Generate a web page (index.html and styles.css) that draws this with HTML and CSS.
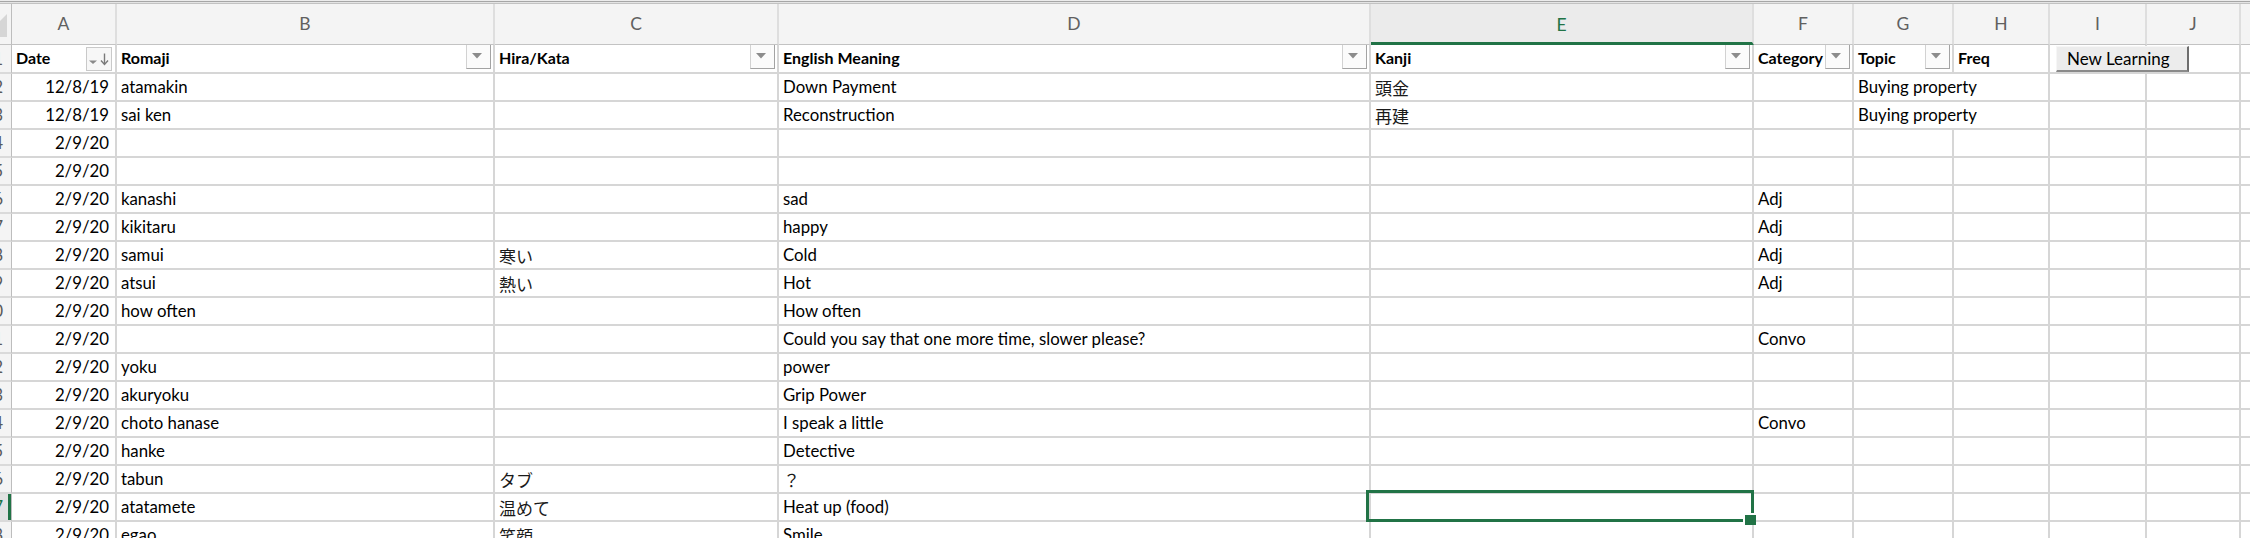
FILE: index.html
```html
<!DOCTYPE html>
<html lang="en">
<head>
<meta charset="utf-8">
<title>Sheet</title>
<link rel="stylesheet" href="styles.css">
</head>
<body>
<div class="sheet">
  <div class="topline"></div>
  <div class="grid">
    <!-- column headers -->
    <div class="ch corner"><svg width="8" height="40" viewBox="0 0 8 40"><polygon points="0,17 7,10 7,33 0,33" fill="#d6d6d6"/></svg></div>
    <div class="ch">A</div>
    <div class="ch">B</div>
    <div class="ch">C</div>
    <div class="ch">D</div>
    <div class="ch sel">E</div>
    <div class="ch">F</div>
    <div class="ch">G</div>
    <div class="ch">H</div>
    <div class="ch">I</div>
    <div class="ch">J</div>
    <div class="ch last"></div>

    <!-- row 1: table header -->
    <div class="rh"><span>1</span></div>
    <div class="c hd"><span class="t">Date</span><span class="sortbtn"><svg width="24" height="22" viewBox="0 0 24 22"><path d="M2 12.5h8l-4 3.5z" fill="#8a8a8a"/><path d="M17.5 5.5v10.5" stroke="#7a7a7a" stroke-width="1.4" fill="none"/><path d="M14 12.5l3.5 4 3.5-4" stroke="#7a7a7a" stroke-width="1.4" fill="none"/></svg></span></div>
    <div class="c hd"><span class="t">Romaji</span><span class="fbtn"><svg width="10" height="6" viewBox="0 0 10 6"><path d="M0 0h10L5 5.5z" fill="#8c8c8c"/></svg></span></div>
    <div class="c hd"><span class="t">Hira/Kata</span><span class="fbtn"><svg width="10" height="6" viewBox="0 0 10 6"><path d="M0 0h10L5 5.5z" fill="#8c8c8c"/></svg></span></div>
    <div class="c hd"><span class="t">English Meaning</span><span class="fbtn"><svg width="10" height="6" viewBox="0 0 10 6"><path d="M0 0h10L5 5.5z" fill="#8c8c8c"/></svg></span></div>
    <div class="c hd"><span class="t">Kanji</span><span class="fbtn"><svg width="10" height="6" viewBox="0 0 10 6"><path d="M0 0h10L5 5.5z" fill="#8c8c8c"/></svg></span></div>
    <div class="c hd"><span class="t">Category</span><span class="fbtn"><svg width="10" height="6" viewBox="0 0 10 6"><path d="M0 0h10L5 5.5z" fill="#8c8c8c"/></svg></span></div>
    <div class="c hd"><span class="t">Topic</span><span class="fbtn"><svg width="10" height="6" viewBox="0 0 10 6"><path d="M0 0h10L5 5.5z" fill="#8c8c8c"/></svg></span></div>
    <div class="c hd"><span class="t">Freq</span></div>
    <div class="c btnhost"><button class="newbtn" type="button">New Learning</button></div>
    <div class="c"></div>
    <div class="c last"></div>

    <!-- row 2 -->
    <div class="rh"><span>2</span></div>
    <div class="c r">12/8/19</div>
    <div class="c">atamakin</div>
    <div class="c"></div>
    <div class="c">Down Payment</div>
    <div class="c jp">頭金</div>
    <div class="c"></div>
    <div class="c span2">Buying property</div>
    <div class="c"></div>
    <div class="c"></div>
    <div class="c last"></div>

    <!-- row 3 -->
    <div class="rh"><span>3</span></div>
    <div class="c r">12/8/19</div>
    <div class="c">sai ken</div>
    <div class="c"></div>
    <div class="c">Reconstruction</div>
    <div class="c jp">再建</div>
    <div class="c"></div>
    <div class="c span2">Buying property</div>
    <div class="c"></div>
    <div class="c"></div>
    <div class="c last"></div>

    <!-- row 4 -->
    <div class="rh"><span>4</span></div>
    <div class="c r">2/9/20</div>
    <div class="c"></div><div class="c"></div><div class="c"></div><div class="c"></div><div class="c"></div><div class="c"></div><div class="c"></div><div class="c"></div><div class="c"></div><div class="c last"></div>

    <!-- row 5 -->
    <div class="rh"><span>5</span></div>
    <div class="c r">2/9/20</div>
    <div class="c"></div><div class="c"></div><div class="c"></div><div class="c"></div><div class="c"></div><div class="c"></div><div class="c"></div><div class="c"></div><div class="c"></div><div class="c last"></div>

    <!-- row 6 -->
    <div class="rh"><span>6</span></div>
    <div class="c r">2/9/20</div>
    <div class="c">kanashi</div>
    <div class="c"></div>
    <div class="c">sad</div>
    <div class="c"></div>
    <div class="c">Adj</div>
    <div class="c"></div><div class="c"></div><div class="c"></div><div class="c"></div><div class="c last"></div>

    <!-- row 7 -->
    <div class="rh"><span>7</span></div>
    <div class="c r">2/9/20</div>
    <div class="c">kikitaru</div>
    <div class="c"></div>
    <div class="c">happy</div>
    <div class="c"></div>
    <div class="c">Adj</div>
    <div class="c"></div><div class="c"></div><div class="c"></div><div class="c"></div><div class="c last"></div>

    <!-- row 8 -->
    <div class="rh"><span>8</span></div>
    <div class="c r">2/9/20</div>
    <div class="c">samui</div>
    <div class="c jp">寒い</div>
    <div class="c">Cold</div>
    <div class="c"></div>
    <div class="c">Adj</div>
    <div class="c"></div><div class="c"></div><div class="c"></div><div class="c"></div><div class="c last"></div>

    <!-- row 9 -->
    <div class="rh"><span>9</span></div>
    <div class="c r">2/9/20</div>
    <div class="c">atsui</div>
    <div class="c jp">熱い</div>
    <div class="c">Hot</div>
    <div class="c"></div>
    <div class="c">Adj</div>
    <div class="c"></div><div class="c"></div><div class="c"></div><div class="c"></div><div class="c last"></div>

    <!-- row 10 -->
    <div class="rh"><span>10</span></div>
    <div class="c r">2/9/20</div>
    <div class="c">how often</div>
    <div class="c"></div>
    <div class="c">How often</div>
    <div class="c"></div><div class="c"></div><div class="c"></div><div class="c"></div><div class="c"></div><div class="c"></div><div class="c last"></div>

    <!-- row 11 -->
    <div class="rh"><span>11</span></div>
    <div class="c r">2/9/20</div>
    <div class="c"></div>
    <div class="c"></div>
    <div class="c">Could you say that one more time, slower please?</div>
    <div class="c"></div>
    <div class="c">Convo</div>
    <div class="c"></div><div class="c"></div><div class="c"></div><div class="c"></div><div class="c last"></div>

    <!-- row 12 -->
    <div class="rh"><span>12</span></div>
    <div class="c r">2/9/20</div>
    <div class="c">yoku</div>
    <div class="c"></div>
    <div class="c">power</div>
    <div class="c"></div><div class="c"></div><div class="c"></div><div class="c"></div><div class="c"></div><div class="c"></div><div class="c last"></div>

    <!-- row 13 -->
    <div class="rh"><span>13</span></div>
    <div class="c r">2/9/20</div>
    <div class="c">akuryoku</div>
    <div class="c"></div>
    <div class="c">Grip Power</div>
    <div class="c"></div><div class="c"></div><div class="c"></div><div class="c"></div><div class="c"></div><div class="c"></div><div class="c last"></div>

    <!-- row 14 -->
    <div class="rh"><span>14</span></div>
    <div class="c r">2/9/20</div>
    <div class="c">choto hanase</div>
    <div class="c"></div>
    <div class="c">I speak a little</div>
    <div class="c"></div>
    <div class="c">Convo</div>
    <div class="c"></div><div class="c"></div><div class="c"></div><div class="c"></div><div class="c last"></div>

    <!-- row 15 -->
    <div class="rh"><span>15</span></div>
    <div class="c r">2/9/20</div>
    <div class="c">hanke</div>
    <div class="c"></div>
    <div class="c">Detective</div>
    <div class="c"></div><div class="c"></div><div class="c"></div><div class="c"></div><div class="c"></div><div class="c"></div><div class="c last"></div>

    <!-- row 16 -->
    <div class="rh"><span>16</span></div>
    <div class="c r">2/9/20</div>
    <div class="c">tabun</div>
    <div class="c jp">タブ</div>
    <div class="c jp">？</div>
    <div class="c"></div><div class="c"></div><div class="c"></div><div class="c"></div><div class="c"></div><div class="c"></div><div class="c last"></div>

    <!-- row 17 (active) -->
    <div class="rh active"><span>17</span></div>
    <div class="c r">2/9/20</div>
    <div class="c">atatamete</div>
    <div class="c jp">温めて</div>
    <div class="c">Heat up (food)</div>
    <div class="c current"><span class="handle"></span></div>
    <div class="c"></div><div class="c"></div><div class="c"></div><div class="c"></div><div class="c"></div><div class="c last"></div>

    <!-- row 18 -->
    <div class="rh"><span>18</span></div>
    <div class="c r">2/9/20</div>
    <div class="c">egao</div>
    <div class="c jp">笑顔</div>
    <div class="c">Smile</div>
    <div class="c"></div><div class="c"></div><div class="c"></div><div class="c"></div><div class="c"></div><div class="c"></div><div class="c last"></div>
  </div>
</div>
</body>
</html>
```
FILE: styles.css
```css
html, body {
  margin: 0;
  padding: 0;
  background: #ffffff;
}

body {
  width: 2250px;
  height: 538px;
  overflow: hidden;
  font-family: Lato, "Noto Sans CJK JP", sans-serif;
  font-size: 16.8px;
  color: #000;
}

.sheet {
  display: flex;
  flex-direction: column;
}

.topline {
  height: 4px;
  background: linear-gradient(to bottom,
    #ececec 0, #ececec 1px,
    #a6a6a6 1px, #a6a6a6 2px,
    #e4e4e4 2px, #e4e4e4 3px,
    #c2c2c2 3px, #c2c2c2 4px);
}

.grid {
  display: grid;
  grid-template-columns: 12px 105px 378px 284px 592px 383px 100px 100px 96px 97px 94px 1fr;
  grid-template-rows: 41px 29px;
  grid-auto-rows: 28px;
}

/* column header */
.ch {
  box-sizing: border-box;
  background: #f4f4f4;
  border-right: 2px solid #dedede;
  border-bottom: 1px solid #c3c3c3;
  display: flex;
  align-items: center;
  justify-content: center;
  color: #606060;
  font-size: 17.5px;
  padding-bottom: 1px;
}

.ch.corner {
  border-right: 1px solid #bdbdbd;
  justify-content: flex-start;
  align-items: stretch;
  padding: 0;
  overflow: hidden;
}

.ch.sel {
  background: #ebebeb;
  color: #217346;
  border-bottom: 3px solid #217346;
  padding-bottom: 0;
  padding-top: 2px;
}

.ch.last {
  border-right: none;
}

/* row header */
.rh {
  box-sizing: border-box;
  background: #f4f4f4;
  border-right: 1px solid #bdbdbd;
  border-bottom: 2px solid #dadada;
  display: flex;
  justify-content: flex-end;
  align-items: flex-end;
  overflow: hidden;
  padding: 0 8px 3px 0;
  color: #5a5a5a;
  font-size: 17px;
  white-space: nowrap;
}

.rh.active {
  background: #e2e2e2;
  color: #217346;
  box-shadow: inset -3px 0 0 #217346;
}

/* cells */
.c {
  box-sizing: border-box;
  border-right: 2px solid #d6d6d6;
  border-bottom: 2px solid #d6d6d6;
  display: flex;
  align-items: flex-end;
  padding: 0 5px 3px 4px;
  white-space: nowrap;
  overflow: hidden;
  line-height: 20px;
  min-width: 0;
}

.c.last {
  border-right: none;
}

.c.r {
  justify-content: flex-end;
  padding-right: 6px;
}

.c.jp {
  font-family: "Noto Sans CJK JP", sans-serif;
  font-size: 17px;
  font-weight: 400;
  color: #1a1a1a;
  padding-bottom: 2px;
}

.c.span2 {
  grid-column: span 2;
}

/* table header row */
.c.hd {
  font-weight: 700;
  font-size: 16px;
  padding-right: 2px;
  padding-bottom: 4px;
  justify-content: space-between;
}

.c.hd .t {
  flex: 1 1 0;
  min-width: 0;
  overflow: visible;
}

.fbtn {
  flex: 0 0 auto;
  align-self: flex-start;
  box-sizing: border-box;
  width: 25px;
  height: 25px;
  margin-top: -1px;
  background: #fbfbfb;
  border-left: 1px solid #d2d2d2;
  border-right: 1px solid #a3a3a3;
  border-bottom: 1px solid #a3a3a3;
  display: flex;
  align-items: center;
  justify-content: center;
  padding-right: 3px;
}

.sortbtn {
  flex: 0 0 auto;
  align-self: flex-start;
  box-sizing: border-box;
  width: 26px;
  height: 24px;
  margin-top: 2px;
  margin-right: 1px;
  border: 1px solid #c9c9c9;
  background: #f7f7f7;
  display: flex;
}

.btnhost {
  overflow: visible;
  position: relative;
}

.newbtn {
  position: absolute;
  left: 6px;
  top: 1px;
  width: 133px;
  height: 26px;
  box-sizing: border-box;
  margin: 0;
  padding: 0 0 0 10px;
  text-align: left;
  font-family: Lato, sans-serif;
  font-size: 17px;
  color: #000;
  background: #ececec;
  border: none;
  border-top: 1px solid #f6f6f6;
  border-left: 1px solid #f6f6f6;
  border-right: 2px solid #6e6e6e;
  border-bottom: 2px solid #8a8a8a;
  line-height: 22px;
  z-index: 2;
}

/* active cell */
.c.current {
  position: relative;
  overflow: visible;
}

.c.current::after {
  content: "";
  position: absolute;
  left: -5px;
  top: -4px;
  right: -2px;
  bottom: -2px;
  border: 3px solid #217346;
  pointer-events: none;
  z-index: 3;
}

.handle {
  position: absolute;
  right: -4px;
  bottom: -5px;
  width: 11px;
  height: 10px;
  background: #217346;
  box-shadow: -2px -2px 0 0 #ffffff;
  z-index: 4;
}
```
